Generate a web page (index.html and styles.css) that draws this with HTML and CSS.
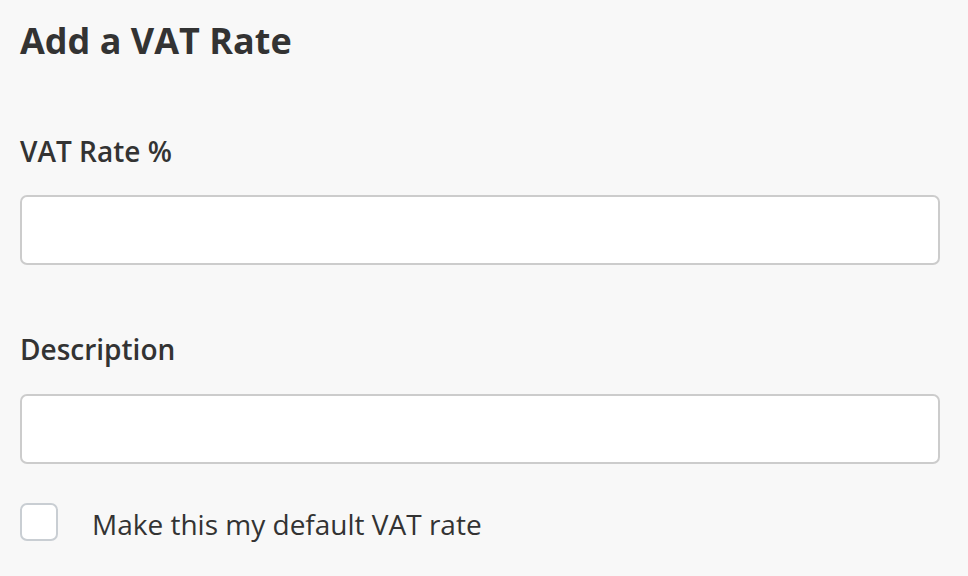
FILE: index.html
```html
<!DOCTYPE html>
<html lang="en">
<head>
<meta charset="utf-8">
<title>Add a VAT Rate</title>
<link rel="stylesheet" href="styles.css">
</head>
<body>
<form class="form">
  <h1 class="title">Add a VAT Rate</h1>
  <div class="field">
    <label class="label" for="rate">VAT Rate %</label>
    <input class="input" id="rate" type="text">
  </div>
  <div class="field">
    <label class="label" for="desc">Description</label>
    <input class="input" id="desc" type="text">
  </div>
  <label class="check">
    <span class="box"></span>
    <span class="check-text">Make this my default VAT rate</span>
  </label>
</form>
</body>
</html>
```
FILE: styles.css
```css
html, body {
  margin: 0;
  padding: 0;
  background: #f8f8f8;
}
body {
  font-family: "Open Sans", "Liberation Sans", sans-serif;
  color: #333333;
}
.form {
  padding: 0 28px 0 20px;
  display: flex;
  flex-direction: column;
}
.title {
  margin: 0;
  padding-top: 17px;
  font-size: 36px;
  line-height: 48px;
  font-weight: 700;
}
.field {
  display: flex;
  flex-direction: column;
}
.label {
  font-size: 28px;
  font-weight: 600;
  line-height: 36px;
  margin-top: 68px;
  margin-bottom: 26px;
}
.field + .field .label {
  margin-top: 66px;
  margin-bottom: 27px;
}
.input {
  box-sizing: border-box;
  height: 70px;
  width: 100%;
  border: 2px solid #cccccc;
  border-radius: 7px;
  background: #ffffff;
  margin: 0;
  font: inherit;
}
.check {
  display: flex;
  align-items: center;
  margin-top: 38px;
}
.box {
  box-sizing: border-box;
  width: 38px;
  height: 38px;
  border: 2px solid #c9ced3;
  border-radius: 7px;
  background: #ffffff;
  flex: none;
}
.check-text {
  margin-left: 34px;
  padding-top: 4px;
  font-size: 28px;
  line-height: 36px;
}
```
